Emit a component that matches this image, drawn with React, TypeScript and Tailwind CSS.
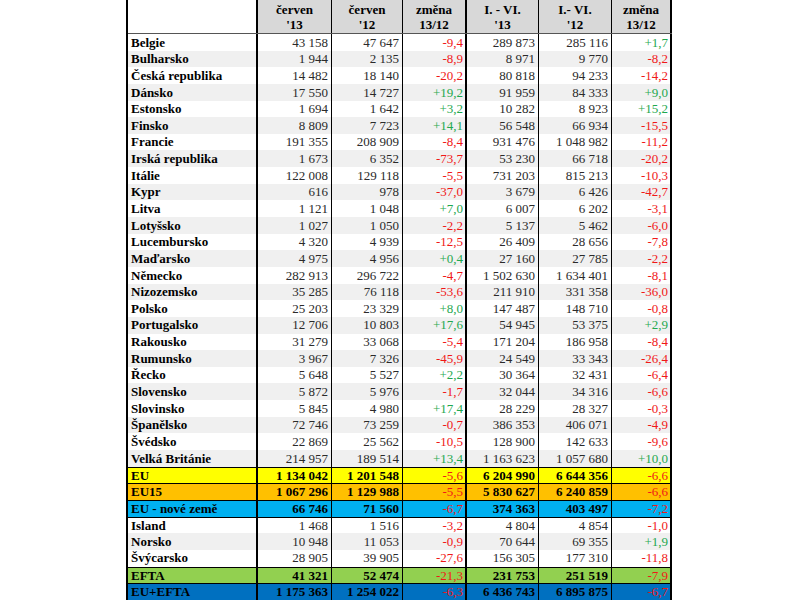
import React from 'react';

type Row = [string, string, string, string, string, string, string];

const COUNTRIES: Row[] = [
  ['Belgie', '43 158', '47 647', '-9,4', '289 873', '285 116', '+1,7'],
  ['Bulharsko', '1 944', '2 135', '-8,9', '8 971', '9 770', '-8,2'],
  ['Česká republika', '14 482', '18 140', '-20,2', '80 818', '94 233', '-14,2'],
  ['Dánsko', '17 550', '14 727', '+19,2', '91 959', '84 333', '+9,0'],
  ['Estonsko', '1 694', '1 642', '+3,2', '10 282', '8 923', '+15,2'],
  ['Finsko', '8 809', '7 723', '+14,1', '56 548', '66 934', '-15,5'],
  ['Francie', '191 355', '208 909', '-8,4', '931 476', '1 048 982', '-11,2'],
  ['Irská republika', '1 673', '6 352', '-73,7', '53 230', '66 718', '-20,2'],
  ['Itálie', '122 008', '129 118', '-5,5', '731 203', '815 213', '-10,3'],
  ['Kypr', '616', '978', '-37,0', '3 679', '6 426', '-42,7'],
  ['Litva', '1 121', '1 048', '+7,0', '6 007', '6 202', '-3,1'],
  ['Lotyšsko', '1 027', '1 050', '-2,2', '5 137', '5 462', '-6,0'],
  ['Lucembursko', '4 320', '4 939', '-12,5', '26 409', '28 656', '-7,8'],
  ['Maďarsko', '4 975', '4 956', '+0,4', '27 160', '27 785', '-2,2'],
  ['Německo', '282 913', '296 722', '-4,7', '1 502 630', '1 634 401', '-8,1'],
  ['Nizozemsko', '35 285', '76 118', '-53,6', '211 910', '331 358', '-36,0'],
  ['Polsko', '25 203', '23 329', '+8,0', '147 487', '148 710', '-0,8'],
  ['Portugalsko', '12 706', '10 803', '+17,6', '54 945', '53 375', '+2,9'],
  ['Rakousko', '31 279', '33 068', '-5,4', '171 204', '186 958', '-8,4'],
  ['Rumunsko', '3 967', '7 326', '-45,9', '24 549', '33 343', '-26,4'],
  ['Řecko', '5 648', '5 527', '+2,2', '30 364', '32 431', '-6,4'],
  ['Slovensko', '5 872', '5 976', '-1,7', '32 044', '34 316', '-6,6'],
  ['Slovinsko', '5 845', '4 980', '+17,4', '28 229', '28 327', '-0,3'],
  ['Španělsko', '72 746', '73 259', '-0,7', '386 353', '406 071', '-4,9'],
  ['Švédsko', '22 869', '25 562', '-10,5', '128 900', '142 633', '-9,6'],
  ['Velká Británie', '214 957', '189 514', '+13,4', '1 163 623', '1 057 680', '+10,0'],
];

const EFTA: Row[] = [
  ['Island', '1 468', '1 516', '-3,2', '4 804', '4 854', '-1,0'],
  ['Norsko', '10 948', '11 053', '-0,9', '70 644', '69 355', '+1,9'],
  ['Švýcarsko', '28 905', '39 905', '-27,6', '156 305', '177 310', '-11,8'],
];

// cell widths incl. right border
const cols = [
  'w-[130px] border-r-2',
  'w-[74px] border-r',
  'w-[71px] border-r',
  'w-[64px] border-r-2',
  'w-[72px] border-r',
  'w-[73px] border-r',
  'w-[60px] border-r-2',
];

const changeColor = (v: string) => (v.startsWith('+') ? 'text-[#1fa84f]' : 'text-[#f01818]');

const DataRow = ({ row, bg, bold, line }: { row: Row; bg: string; bold?: boolean; line?: boolean }) => (
  <div className={`flex h-[16.65px] ${bg} ${line ? 'border-t border-black' : ''}`}>
    {row.map((v, i) => {
      const isChange = i === 3 || i === 6;
      let cls = '';
      if (i === 0) cls = 'justify-start pl-[3px] font-bold text-black';
      else if (isChange) cls = `justify-end pr-[2px] ${changeColor(v)}`;
      else cls = `justify-end pr-[3px] ${bold ? 'font-bold text-black' : 'text-[#2a2a2a]'}`;
      return (
        <div key={i} className={`${cols[i]} border-black flex items-center overflow-hidden whitespace-nowrap ${cls}`}>
          {v}
        </div>
      );
    })}
  </div>
);

const HeaderCell = ({ w, a, b, white }: { w: string; a?: string; b?: string; white?: boolean }) => (
  <div className={`${w} border-black flex flex-col items-center justify-center font-bold leading-[15px] ${white ? 'bg-white' : 'bg-[#d8d8d8]'}`}>
    <span>{a}</span>
    <span>{b}</span>
  </div>
);

export default function App() {
  const totals: { row: Row; bg: string }[] = [
    { row: ['EU', '1 134 042', '1 201 548', '-5,6', '6 204 990', '6 644 356', '-6,6'], bg: 'bg-[#ffff00]' },
    { row: ['EU15', '1 067 296', '1 129 988', '-5,5', '5 830 627', '6 240 859', '-6,6'], bg: 'bg-[#ffc000]' },
    { row: ['EU - nové země', '66 746', '71 560', '-6,7', '374 363', '403 497', '-7,2'], bg: 'bg-[#00b0f0]' },
  ];
  return (
    <div className="w-[800px] h-[600px] bg-white overflow-hidden">
      <div
        className="ml-[126px] w-[546px] border-l-2 border-black text-[13px] text-black"
        style={{ fontFamily: '"Liberation Serif", "Times New Roman", serif' }}
      >
        <div className="flex h-[34px] border-b border-[#555]">
          <HeaderCell w={cols[0]} white />
          <HeaderCell w={cols[1]} a="červen" b="'13" />
          <HeaderCell w={cols[2]} a="červen" b="'12" />
          <HeaderCell w={cols[3]} a="změna" b="13/12" />
          <HeaderCell w={cols[4]} a="I. - VI." b="'13" />
          <HeaderCell w={cols[5]} a="I.- VI." b="'12" />
          <HeaderCell w={cols[6]} a="změna" b="13/12" />
        </div>
        {COUNTRIES.map((r, i) => (
          <DataRow key={r[0]} row={r} bg={i % 2 ? 'bg-[#f0f0f0]' : 'bg-white'} />
        ))}
        {totals.map(t => (
          <DataRow key={t.row[0]} row={t.row} bg={t.bg} bold line />
        ))}
        {EFTA.map((r, i) => (
          <DataRow key={r[0]} row={r} bg={i % 2 ? 'bg-[#f0f0f0]' : 'bg-white'} line={i === 0} />
        ))}
        <DataRow row={['EFTA', '41 321', '52 474', '-21,3', '231 753', '251 519', '-7,9']} bg="bg-[#92d050]" bold line />
        <DataRow row={['EU+EFTA', '1 175 363', '1 254 022', '-6,3', '6 436 743', '6 895 875', '-6,7']} bg="bg-[#0070c0]" bold line />
      </div>
    </div>
  );
}
